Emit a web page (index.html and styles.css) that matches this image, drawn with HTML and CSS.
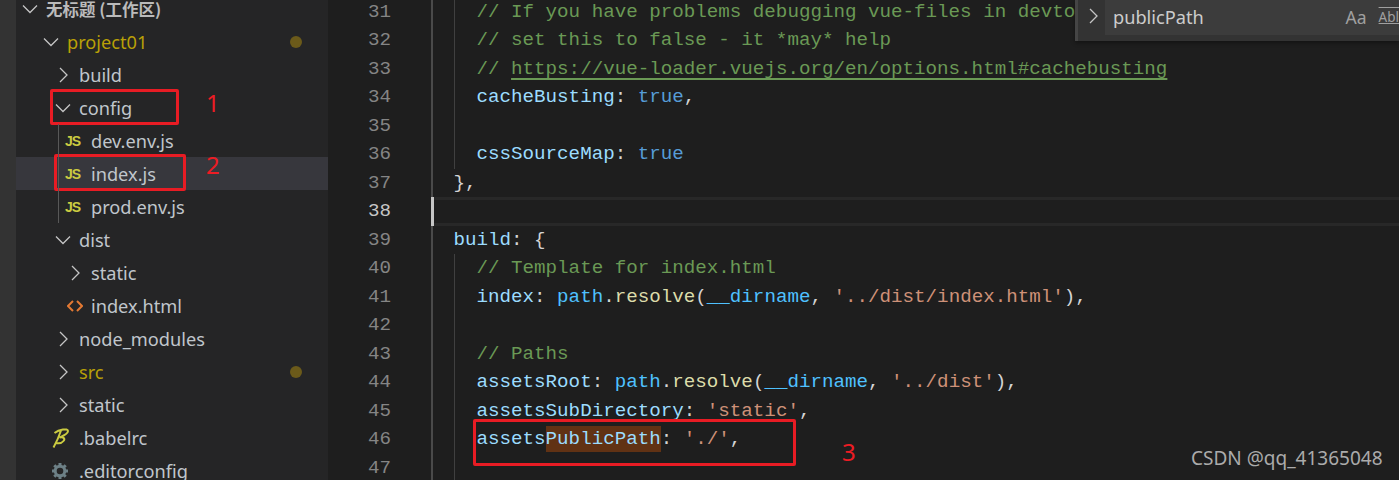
FILE: index.html
```html
<!DOCTYPE html>
<html lang="zh">
<head>
<meta charset="utf-8">
<title>index.js</title>
<link rel="stylesheet" href="styles.css">
</head>
<body>
<div class="app">
  <div class="activity"></div>
  <aside class="sidebar">
    <div class="row d0 head"><svg class="ic" viewBox="0 0 16 16"><polyline points="1,4.5 8,11.5 15,4.5"/></svg><span>无标题 (工作区)</span></div>
    <div class="row d1 mod"><svg class="ic" viewBox="0 0 16 16"><polyline points="1,4.5 8,11.5 15,4.5"/></svg><span>project01</span><i class="dot"></i></div>
    <div class="row d2"><svg class="ic" viewBox="0 0 16 16"><polyline points="5,1 12,8 5,15"/></svg><span>build</span></div>
    <div class="row d2"><svg class="ic" viewBox="0 0 16 16"><polyline points="1,4.5 8,11.5 15,4.5"/></svg><span>config</span></div>
    <div class="children">
      <div class="row d3"><b class="js">JS</b><span>dev.env.js</span></div>
      <div class="row d3 hover"><b class="js">JS</b><span>index.js</span></div>
      <div class="row d3"><b class="js">JS</b><span>prod.env.js</span></div>
    </div>
    <div class="row d2"><svg class="ic" viewBox="0 0 16 16"><polyline points="1,4.5 8,11.5 15,4.5"/></svg><span>dist</span></div>
    <div class="row d3"><svg class="ic" viewBox="0 0 16 16"><polyline points="5,1 12,8 5,15"/></svg><span>static</span></div>
    <div class="row d3"><svg class="ic html" viewBox="0 0 16 16"><polyline points="6,3 1,8 6,13"/><polyline points="10,3 15,8 10,13"/></svg><span>index.html</span></div>
    <div class="row d2"><svg class="ic" viewBox="0 0 16 16"><polyline points="5,1 12,8 5,15"/></svg><span>node_modules</span></div>
    <div class="row d2 mod"><svg class="ic" viewBox="0 0 16 16"><polyline points="5,1 12,8 5,15"/></svg><span>src</span><i class="dot"></i></div>
    <div class="row d2"><svg class="ic" viewBox="0 0 16 16"><polyline points="5,1 12,8 5,15"/></svg><span>static</span></div>
    <div class="row d2"><svg class="ic babel" viewBox="0 0 17 20"><path d="M1.500 19.500C4 15 7.500 7 9 2.500M2.500 5C7 1.500 16 0 16 3C16 6 11 8 7.500 9.500C11.500 8.500 13.500 10.500 11.500 13C9.500 15.500 6 15.500 4 15"/></svg><span>.babelrc</span></div>
    <div class="row d2"><svg class="ic gear" viewBox="0 0 18 18"><circle cx="9" cy="9" r="4.800"/><path d="M9 1V4M9 14V17M1 9H4M14 9H17M3.300 3.300L5.500 5.500M12.500 12.500L14.700 14.700M14.700 3.300L12.500 5.500M5.500 12.500L3.300 14.700"/></svg><span>.editorconfig</span></div>
  </aside>
  <main class="editor">
    <div class="gutter">
      <div>31</div><div>32</div><div>33</div><div>34</div><div>35</div><div>36</div><div>37</div>
      <div class="cur">38</div>
      <div>39</div><div>40</div><div>41</div><div>42</div><div>43</div><div>44</div><div>45</div><div>46</div><div>47</div>
    </div>
    <div class="code">
      <div class="line"><i class="ind"></i><span class="c">// If you have problems debugging vue-files in devtools,</span></div>
      <div class="line"><i class="ind"></i><span class="c">// set this to false - it *may* help</span></div>
      <div class="line"><i class="ind"></i><span class="c">// <u>https://vue-loader.vuejs.org/en/options.html#cachebusting</u></span></div>
      <div class="line"><i class="ind"></i><span class="p">cacheBusting</span>: <span class="k">true</span>,</div>
      <div class="line"><i class="ind"></i></div>
      <div class="line"><i class="ind"></i><span class="p">cssSourceMap</span>: <span class="k">true</span></div>
      <div class="line">},</div>
      <div class="line active"></div>
      <div class="line"><span class="p">build</span>: {</div>
      <div class="line"><i class="ind"></i><span class="c">// Template for index.html</span></div>
      <div class="line"><i class="ind"></i><span class="p">index</span>: <span class="v">path</span>.<span class="f">resolve</span>(<span class="v">__dirname</span>, <span class="s">'../dist/index.html'</span>),</div>
      <div class="line"><i class="ind"></i></div>
      <div class="line"><i class="ind"></i><span class="c">// Paths</span></div>
      <div class="line"><i class="ind"></i><span class="p">assetsRoot</span>: <span class="v">path</span>.<span class="f">resolve</span>(<span class="v">__dirname</span>, <span class="s">'../dist'</span>),</div>
      <div class="line"><i class="ind"></i><span class="p">assetsSubDirectory</span>: <span class="s">'static'</span>,</div>
      <div class="line"><i class="ind"></i><span class="p">assets<mark>PublicPath</mark></span>: <span class="s">'./'</span>,</div>
      <div class="line"><i class="ind"></i></div>
    </div>
  </main>
  <div class="find">
    <svg class="find-toggle" viewBox="0 0 16 16"><polyline points="5,1 12,8 5,15"/></svg>
    <div class="find-input"><span>publicPath</span><span class="aa">Aa</span><span class="abl">Abl</span></div>
  </div>
  <div class="mark box1"></div>
  <div class="mark box2"></div>
  <div class="mark box3"></div>
  <span class="num n1">1</span>
  <span class="num n2">2</span>
  <span class="num n3">3</span>
  <span class="watermark">CSDN @qq_41365048</span>
</div>
</body>
</html>
```
FILE: styles.css
```css
* { box-sizing: border-box; }
html, body { margin: 0; height: 100%; overflow: hidden; background: #1e1e1e; }
.app { position: relative; display: flex; width: 1399px; height: 480px; overflow: hidden; }
.activity { width: 16px; flex: none; background: #333333; }

.sidebar {
  width: 312px; flex: none; background: #252526;
  font: 18.200px/24px "Noto Sans", "Noto Sans CJK SC", sans-serif; color: #c0c6cc;
}
.row { display: flex; align-items: center; gap: 8px; height: 33px; white-space: nowrap; }
.d0 { padding-left: 6px; }
.d1 { padding-left: 27px; }
.d2 { padding-left: 39px; }
.d3 { padding-left: 51px; }
.head { margin-top: -8px; font-family: "Noto Sans CJK SC", "Noto Sans", sans-serif; font-weight: 700; font-size: 16.500px; line-height: 16px; color: #bbbbbb; }
.mod { color: #b9a007; }
.hover { background: #37373d; }
.ic { width: 16px; height: 16px; flex: none; fill: none; stroke: #c5c5c5; stroke-width: 1.300; }
.html { stroke: #e37933; stroke-width: 2; }
.babel { width: 17px; height: 20px; stroke: #cbcb41; stroke-width: 2; margin-left: -3px; margin-right: 2px; }
.gear { width: 18px; height: 18px; stroke: #6d8086; stroke-width: 3; margin-left: -4px; margin-right: 2px; }
.js { width: 16px; flex: none; margin-left: -2px; margin-right: 2px; color: #cbcb41; font: 700 14px/1 "Liberation Sans", sans-serif; letter-spacing: -1px; }
.dot { position: absolute; left: 290px; width: 12px; height: 12px; border-radius: 50%; background: #6b5a1a; }
.children { position: relative; }
.children::before { content: ""; position: absolute; z-index: 1; left: 42px; top: 0; bottom: 0; width: 1px; background: #585858; }

.editor { flex: 1; display: flex; background: #1e1e1e; font: 19.200px/28.500px "Liberation Mono", "DejaVu Sans Mono", monospace; color: #d4d4d4; }
.gutter { width: 103px; flex: none; margin-top: -2.500px; padding-right: 40px; text-align: right; color: #858585; }
.gutter div { height: 28.500px; }
.gutter .cur { color: #c6c6c6; }
.code { flex: 1; margin-top: -2.500px; border-left: 2px solid #4a4a4a; }
.line { display: flex; height: 28.500px; padding-left: 20.500px; white-space: pre; }
.line.active { border-top: 3px solid #282828; border-bottom: 3px solid #282828; margin-left: -2px; position: relative; }
.line.active::before { content: ""; position: absolute; left: 0; top: -3px; bottom: -3px; width: 3px; background: #c6c6c6; }
.ind { display: block; width: 23px; flex: none; border-left: 1px solid #404040; }
.c { color: #6a9955; }
.p { color: #9cdcfe; }
.k { color: #569cd6; }
.v { color: #4fc1ff; }
.f { color: #dcdcaa; }
.s { color: #ce9178; }
.c u { text-decoration-thickness: 2px; text-underline-offset: 4px; }
mark { background: #613214; color: inherit; padding: 2px 0; }

.find { position: absolute; left: 1075px; top: 0; width: 324px; height: 41px; display: flex; background: #333333; border-left: 3px solid #454545; box-shadow: 0 2px 4px #00000060; }
.find-toggle { width: 16px; height: 16px; margin: 8px 0 0 7px; flex: none; fill: none; stroke: #c5c5c5; stroke-width: 1.300; }
.find-input { flex: 1; display: flex; height: 35px; margin-left: 4px; padding-left: 8px; background: #3c3c3c; color: #cccccc; font: 18.200px/35px "Noto Sans", sans-serif; }
.aa { margin-left: auto; color: #a0a0a0; font-size: 17.500px; }
.abl { margin-left: 12px; color: #a0a0a0; font-size: 13.500px; text-decoration: underline overline; }

.mark { position: absolute; border: 3px solid #e81c24; border-radius: 2px; }
.box1 { left: 50px; top: 89px; width: 129px; height: 36px; }
.box2 { left: 54px; top: 154px; width: 132px; height: 37px; }
.box3 { left: 473px; top: 419px; width: 323px; height: 47px; }
.num { position: absolute; color: #ed1c24; font: 24px/30px "Noto Sans", sans-serif; }
.n1 { left: 206px; top: 88px; }
.n2 { left: 206px; top: 150px; }
.n3 { left: 842px; top: 437px; }
.watermark { position: absolute; left: 1191px; top: 444px; color: #ababab; font: 19px/28px "Noto Sans", sans-serif; white-space: nowrap; }
```
